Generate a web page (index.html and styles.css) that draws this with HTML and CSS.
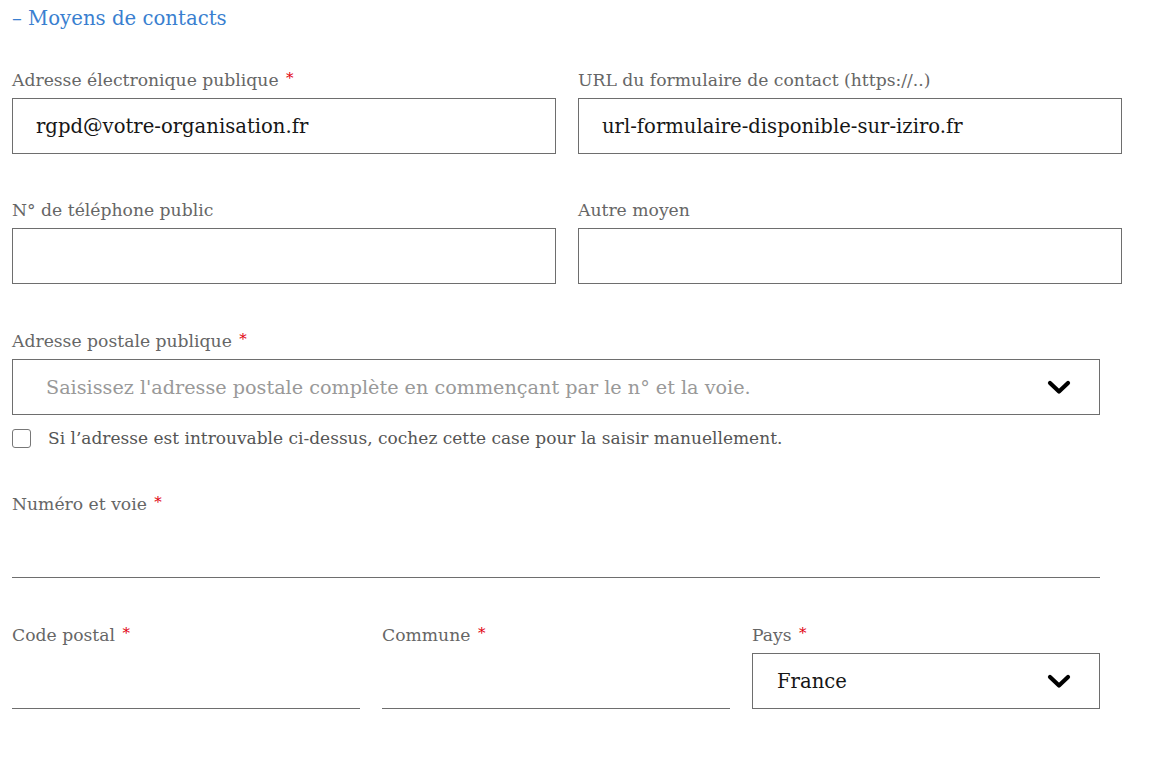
FILE: index.html
```html
<!DOCTYPE html>
<html lang="fr">
<head>
<meta charset="utf-8">
<link rel="stylesheet" href="styles.css">
</head>
<body>
<div class="form">
  <h2 class="section-title">– Moyens de contacts</h2>

  <div class="grid two first">
    <div class="field">
      <label class="label">Adresse électronique publique <span class="req">*</span></label>
      <div class="box"><span class="value">rgpd@votre-organisation.fr</span></div>
    </div>
    <div class="field">
      <label class="label">URL du formulaire de contact (https://..)</label>
      <div class="box"><span class="value">url-formulaire-disponible-sur-iziro.fr</span></div>
    </div>
  </div>

  <div class="grid two">
    <div class="field">
      <label class="label">N° de téléphone public</label>
      <div class="box"></div>
    </div>
    <div class="field">
      <label class="label">Autre moyen</label>
      <div class="box"></div>
    </div>
  </div>

  <div class="grid full wide-gap">
    <div class="field">
      <label class="label">Adresse postale publique <span class="req">*</span></label>
      <div class="box select">
        <span class="placeholder">Saisissez l'adresse postale complète en commençant par le n° et la voie.</span>
        <svg class="chev" width="24" height="16" viewBox="0 0 24 16"><polyline points="3,4 12,12.5 21,4" fill="none" stroke="#000" stroke-width="4.2" stroke-linecap="round" stroke-linejoin="round"/></svg>
      </div>
    </div>
  </div>

  <div class="check-row">
    <span class="checkbox"></span>
    <span class="check-label">Si l’adresse est introuvable ci-dessus, cochez cette case pour la saisir manuellement.</span>
  </div>

  <div class="grid full">
    <div class="field">
      <label class="label">Numéro et voie <span class="req">*</span></label>
      <div class="line"></div>
    </div>
  </div>

  <div class="grid three wide-gap">
    <div class="field">
      <label class="label">Code postal <span class="req">*</span></label>
      <div class="line"></div>
    </div>
    <div class="field">
      <label class="label">Commune <span class="req">*</span></label>
      <div class="line"></div>
    </div>
    <div class="field">
      <label class="label">Pays <span class="req">*</span></label>
      <div class="box select">
        <span class="value country">France</span>
        <svg class="chev" width="24" height="16" viewBox="0 0 24 16"><polyline points="3,4 12,12.5 21,4" fill="none" stroke="#000" stroke-width="4.2" stroke-linecap="round" stroke-linejoin="round"/></svg>
      </div>
    </div>
  </div>
</div>
</body>
</html>
```

FILE: styles.css
```css
* { box-sizing: border-box; }
html, body { margin: 0; padding: 0; background: #fff; }
body { font-family: "DejaVu Serif", "Liberation Serif", serif; }

.form { padding: 7px 0 40px 12px; }

.section-title {
  margin: 0;
  font-weight: normal;
  font-size: 19.7px;
  line-height: 24px;
  color: #3a7fd0;
}

.grid { display: grid; column-gap: 22px; margin-top: 45px; }
.grid.first { margin-top: 38px; }
.grid.wide-gap { margin-top: 46px; }
.grid.two { grid-template-columns: 544px 544px; }
.grid.full { grid-template-columns: 1088px; }
.grid.three { grid-template-columns: 348px 348px 348px; }

.field { display: flex; flex-direction: column; }

.label {
  display: block;
  height: 22px;
  font-size: 17.2px;
  line-height: 22px;
  color: #666;
  margin-bottom: 7px;
  white-space: nowrap;
}
.req { color: #e1000f; font-size: 15px; line-height: 0; position: relative; top: -3px; margin-left: 2px; }

.box {
  height: 56px;
  border: 1px solid #6e6e6e;
  display: flex;
  align-items: center;
  padding-left: 23px;
}
.value { font-size: 19.6px; color: #161616; }
.box.select { padding-left: 33px; padding-right: 28px; justify-content: space-between; }
.box.select .country { margin-left: -9px; }
.placeholder { font-size: 19.2px; color: #999; }
.chev { display: block; }

.check-row { display: flex; align-items: center; margin-top: 13px; height: 20px; }
.checkbox {
  width: 19px; height: 19px;
  border: 1px solid #777;
  border-radius: 3px;
  flex: none;
}
.check-label { margin-left: 17px; font-size: 17px; color: #555; }

.line { height: 56px; border-bottom: 1px solid #6e6e6e; }
```
